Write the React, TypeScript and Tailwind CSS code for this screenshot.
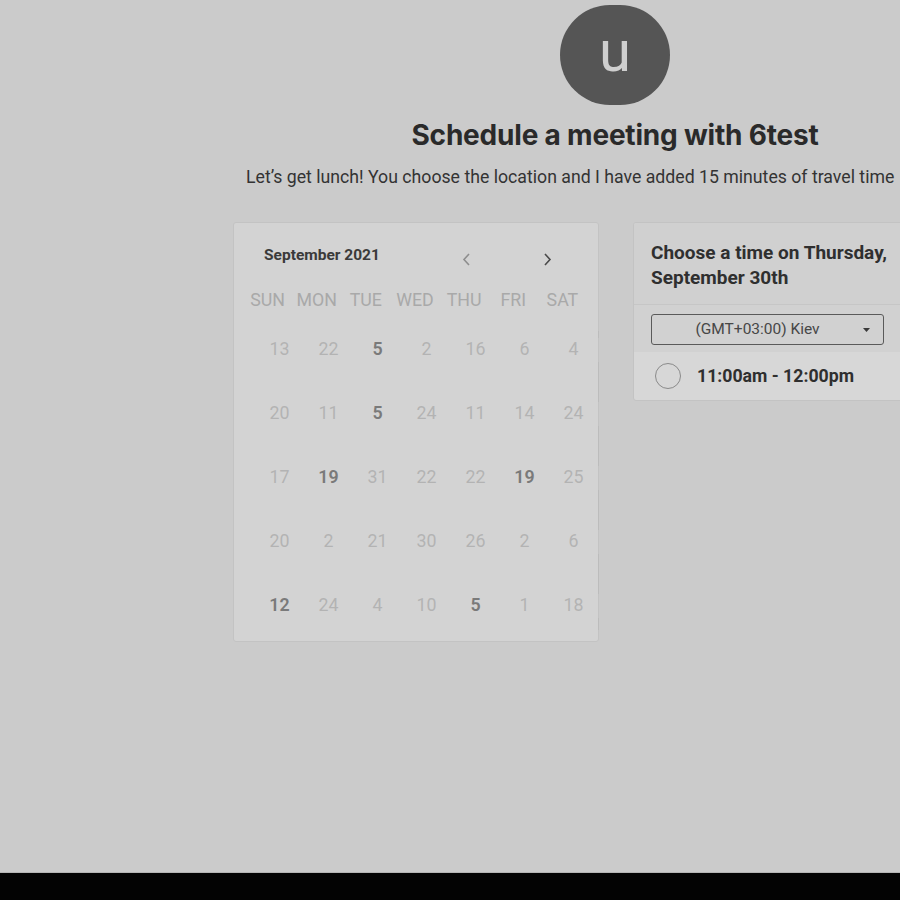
const days = ["SUN", "MON", "TUE", "WED", "THU", "FRI", "SAT"];

// [value, bold]
const weeks: [string, boolean][][] = [
  [["13", false], ["22", false], ["5", true], ["2", false], ["16", false], ["6", false], ["4", false]],
  [["20", false], ["11", false], ["5", true], ["24", false], ["11", false], ["14", false], ["24", false]],
  [["17", false], ["19", true], ["31", false], ["22", false], ["22", false], ["19", true], ["25", false]],
  [["20", false], ["2", false], ["21", false], ["30", false], ["26", false], ["2", false], ["6", false]],
  [["12", true], ["24", false], ["4", false], ["10", false], ["5", true], ["1", false], ["18", false]],
];

// edge segments showing between the date rows
const edgeSegments = [
  { top: 108, h: 7 },
  { top: 139, h: 40 },
  { top: 203, h: 40 },
  { top: 267, h: 40 },
  { top: 331, h: 40 },
  { top: 395, h: 12 },
];

function Calendar() {
  return (
    <div className="relative h-[420px] w-[366px] shrink-0 rounded-[3px] border border-[#c3c3c3] bg-[#d3d3d3]">
      <div className="mt-[21px] flex h-[24px] items-center pl-[30px]">
        <span className="w-[192px] text-[15.5px] font-bold text-[#3a3a3a]">September 2021</span>
        <button className="mt-[6px] flex w-[20px] justify-center text-[#8e8e8e]">
          <svg width="11" height="15" viewBox="0 0 11 15" fill="none" stroke="currentColor" strokeWidth="1.6">
            <path d="M8 2 L3 7.5 L8 13" />
          </svg>
        </button>
        <button className="ml-[61px] mt-[6px] flex w-[20px] justify-center text-[#4a4a4a]">
          <svg width="11" height="15" viewBox="0 0 11 15" fill="none" stroke="currentColor" strokeWidth="1.6">
            <path d="M3 2 L8 7.5 L3 13" />
          </svg>
        </button>
      </div>
      <div className="mt-[21px] grid grid-cols-7 pl-[9px] pr-[11px]">
        {days.map((d) => (
          <div key={d} className="text-center text-[17.8px] leading-[22px] text-[#a9a9a9]">
            {d}
          </div>
        ))}
      </div>
      <div className="mt-[26px] flex flex-col gap-[40px] pl-[21px]">
        {weeks.map((w, i) => (
          <div key={i} className="grid grid-cols-7">
            {w.map(([v, b], j) => (
              <div
                key={j}
                className={
                  b
                    ? "text-center text-[17.8px] font-semibold leading-[24px] text-[#7a7a7a]"
                    : "text-center text-[17.8px] leading-[24px] text-[#b3b3b3]"
                }
              >
                {v}
              </div>
            ))}
          </div>
        ))}
      </div>
      {edgeSegments.map((s) => (
        <div
          key={s.top}
          className="absolute right-[-1px] w-[1px] bg-[#bcbcbc]"
          style={{ top: s.top, height: s.h }}
        />
      ))}
    </div>
  );
}

function TimePanel() {
  return (
    <div className="w-[300px] shrink-0 overflow-hidden rounded-[3px] border border-[#c3c3c3] bg-[#d7d7d7]">
      <div className="border-b border-[#c6c6c6] bg-[#d0d0d0] pb-[14px] pl-[17px] pt-[17px] text-[19px] font-bold leading-[25px] text-[#2f2f2f]">
        Choose a time on Thursday,
        <br />
        September 30th
      </div>
      <div className="bg-[#d1d1d1] pb-[7px] pl-[17px] pt-[9px]">
        <div className="relative flex h-[31px] w-[233px] items-center justify-center rounded-[3px] border border-[#5a5a5a] pr-[20px] text-[15.5px] text-[#474747]">
          (GMT+03:00) Kiev
          <svg className="absolute right-[13px] top-[13px]" width="7" height="4" viewBox="0 0 7 4">
            <path d="M0 0 H7 L3.5 4 Z" fill="#3a3a3a" />
          </svg>
        </div>
      </div>
      <div className="flex h-[48px] items-center pl-[21px]">
        <div className="h-[26px] w-[26px] rounded-full border-[1.5px] border-[#8a8a8a]" />
        <span className="ml-[16px] text-[17.7px] font-bold text-[#2f2f2f]">11:00am - 12:00pm</span>
      </div>
    </div>
  );
}

export default function App() {
  return (
    <div className="w-[900px] overflow-hidden" style={{ fontFamily: "Roboto, 'Liberation Sans', sans-serif" }}>
      <div className="h-[872px] bg-[#cbcbcb]">
        <div className="flex flex-col items-center pl-[330px] pt-[5px]">
          <div className="flex h-[100px] w-[110px] items-center justify-center rounded-full bg-[#555555] pb-[8px] text-[58px] leading-none text-[#cfcfcf]">
            u
          </div>
          <h1
            className="mt-[13px] text-[28px] font-bold leading-[34px] tracking-[-0.2px] text-[#2a2a2a]"
            style={{ fontFamily: "Inter, 'Liberation Sans', sans-serif" }}
          >
            Schedule a meeting with 6test
          </h1>
        </div>
        <p className="mt-[13px] whitespace-nowrap pl-[246px] text-[17.7px] leading-[24px] text-[#333333]">
          Let’s get lunch! You choose the location and I have added 15 minutes of travel time
        </p>
        <div className="mt-[33px] flex items-start gap-[34px] pl-[233px]">
          <Calendar />
          <TimePanel />
        </div>
      </div>
      <div className="h-[1px] bg-[#b5b5b5]" />
      <div className="h-[27px] bg-[#030303]" />
    </div>
  );
}
